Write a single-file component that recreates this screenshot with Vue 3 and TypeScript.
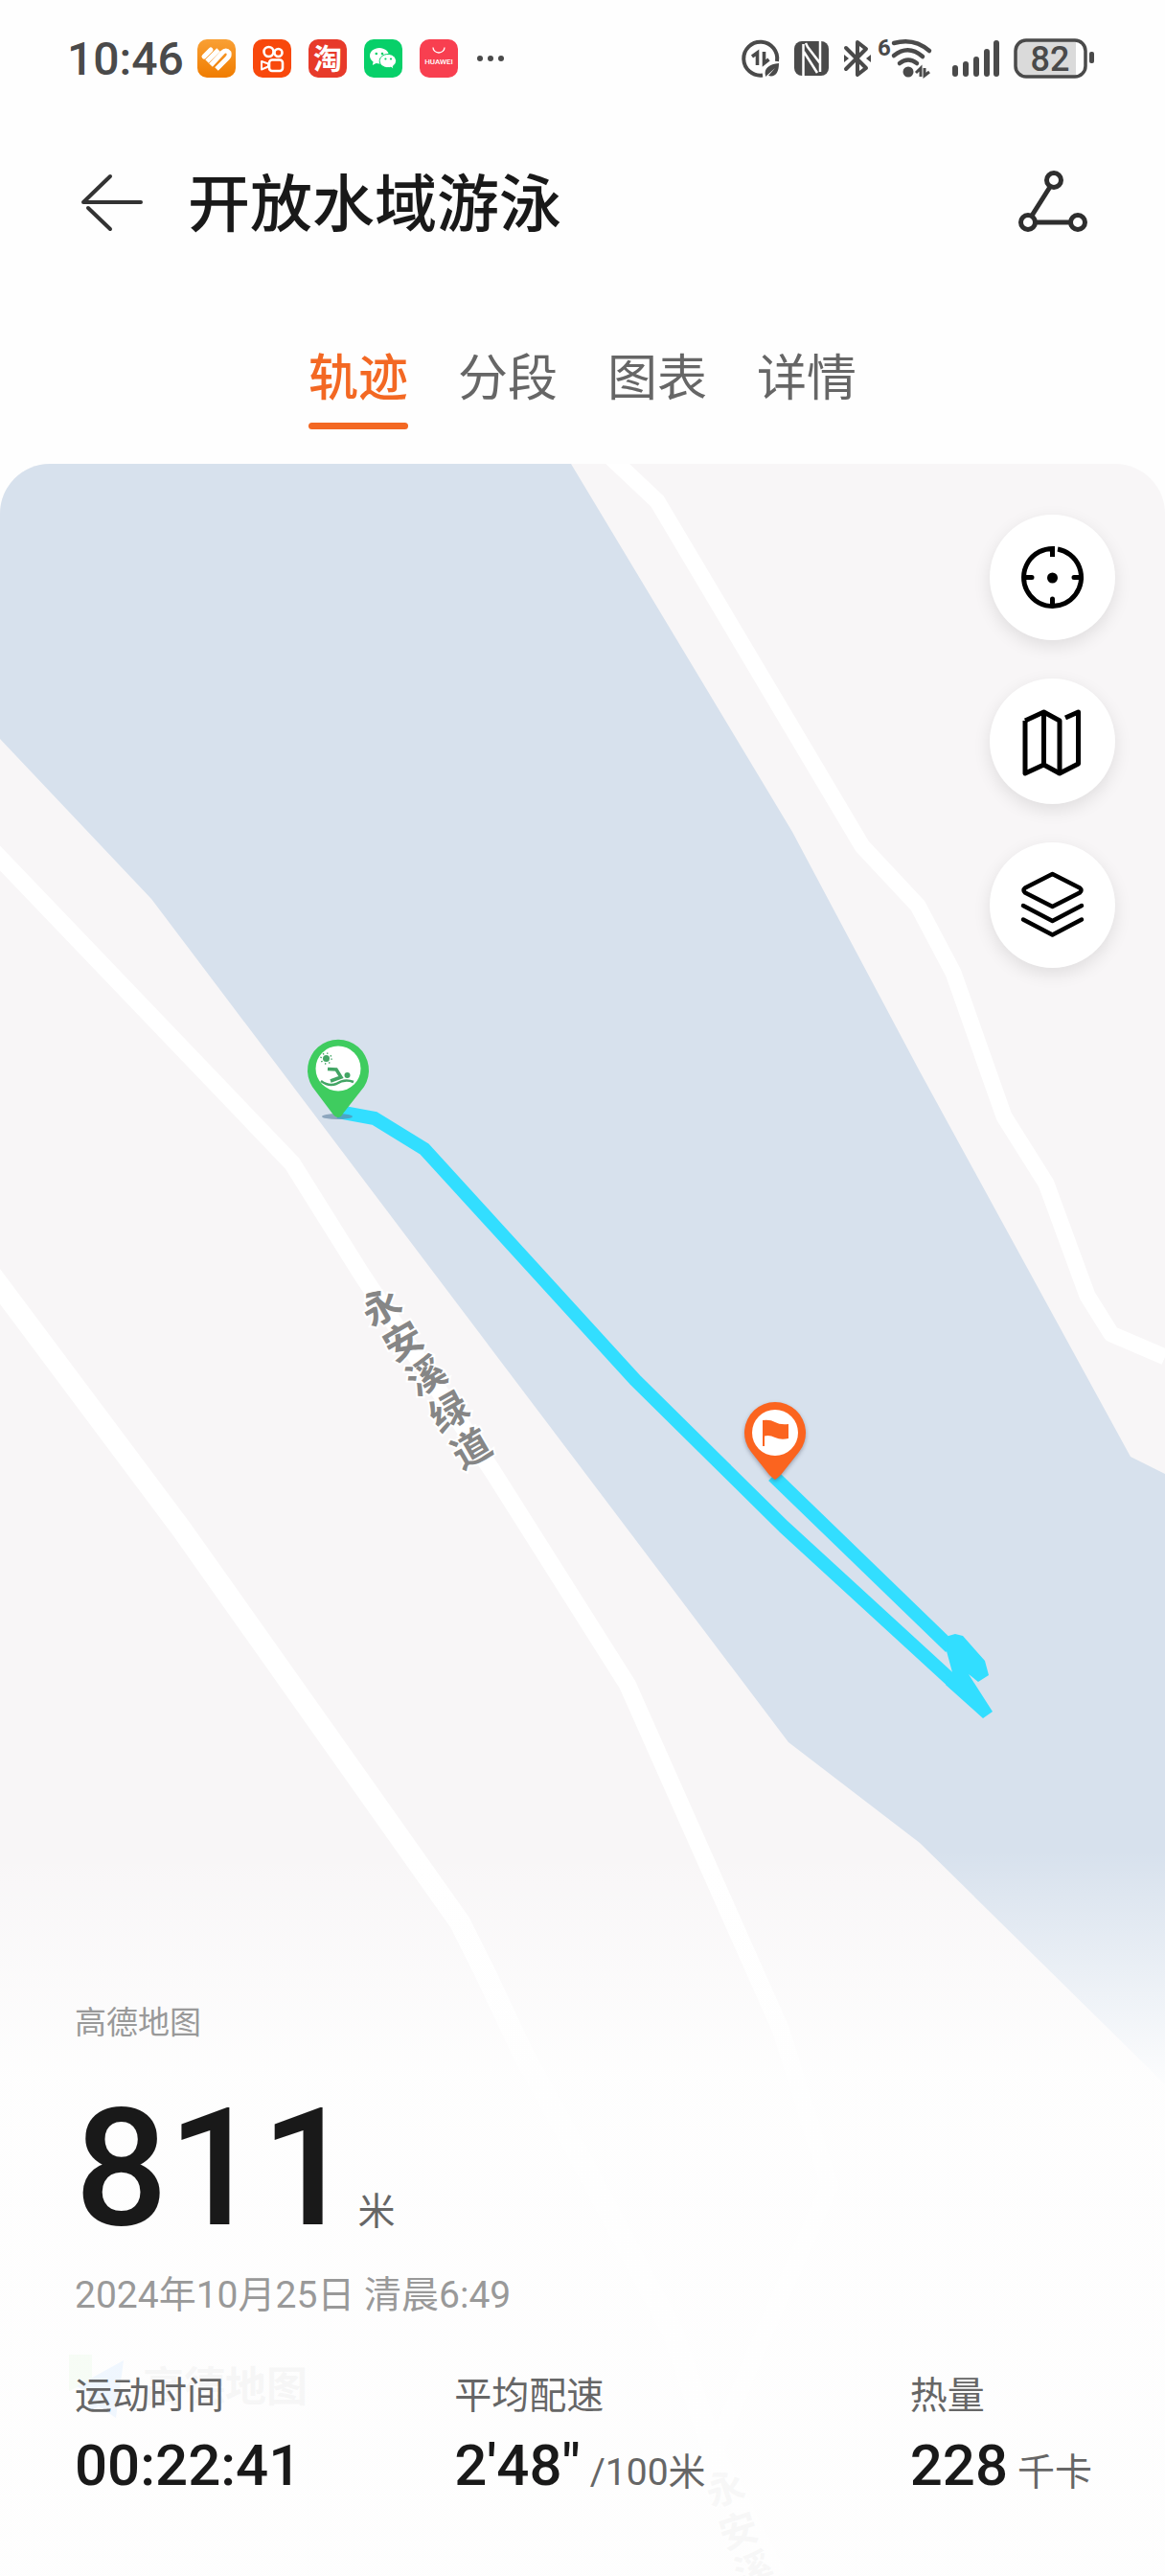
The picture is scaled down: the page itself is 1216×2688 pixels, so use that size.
<script setup lang="ts">
import { ref } from 'vue'

interface Metric {
  label: string
  value: string
  unit?: string
}

interface LabelGlyph {
  char: string
  x: number
  y: number
}

const tabs: string[] = ['轨迹', '分段', '图表', '详情']
const activeTab = ref<string>('轨迹')

const metrics: Metric[] = [
  { label: '运动时间', value: '00:22:41' },
  { label: '平均配速', value: '2\'48"', unit: '/100米' },
  { label: '热量', value: '228', unit: '千卡' },
]

// Street names follow their road, one rotated character at a time.
const streetLabel: LabelGlyph[] = [
  { char: '永', x: 398, y: 880 },
  { char: '安', x: 421, y: 916 },
  { char: '溪', x: 445, y: 952 },
  { char: '绿', x: 469, y: 990 },
  { char: '道', x: 492, y: 1028 },
]
const lowerLabel: LabelGlyph[] = [
  { char: '永', x: 757, y: 2113 },
  { char: '安', x: 771, y: 2157 },
  { char: '溪', x: 787, y: 2198 },
]
</script>

<template>
  <div class="page">
    <div class="status">
      <div class="status-left">
        <span class="clock">10:46</span>
        <svg class="app" viewBox="0 0 40 40" aria-hidden="true">
          <defs>
            <linearGradient id="health" x1="0" y1="0" x2="0" y2="1">
              <stop offset="0" stop-color="#f9a035" />
              <stop offset="1" stop-color="#f07c00" />
            </linearGradient>
          </defs>
          <rect width="40" height="40" rx="10" fill="url(#health)" />
          <g fill="none" stroke="#fff" stroke-width="5">
            <path d="M7 18 14 11" stroke-linecap="round" />
            <path d="M10 23 22 11" />
            <path d="M14 27 26 14Q30 10 33 14Q34 17 31 20L20 31" />
          </g>
        </svg>
        <svg class="app" viewBox="0 0 40 40" aria-hidden="true">
          <rect width="40" height="40" rx="10" fill="#f8480c" />
          <g fill="none" stroke="#fff" stroke-width="2.6">
            <circle cx="16.500" cy="13" r="5" />
            <circle cx="26.500" cy="14" r="4" />
            <rect x="17" y="21.500" width="14" height="11.500" rx="3" />
            <path d="M9 23v8.500L16 28.500v-3Z" stroke-width="2" stroke-linejoin="round" />
          </g>
        </svg>
        <svg class="app" viewBox="0 0 40 40" aria-hidden="true">
          <rect width="40" height="40" rx="10" fill="#e73a2a" />
          <text x="20" y="31" class="tao">淘</text>
        </svg>
        <svg class="app" viewBox="0 0 40 40" aria-hidden="true">
          <rect width="40" height="40" rx="10" fill="#07d069" />
          <path d="M16 9C10.500 9 6 12.600 6 17.200c0 2.600 1.400 4.800 3.600 6.300L8.800 27l3.800-2c1 .3 2.200.5 3.400.5 5.500 0 10-3.700 10-8.300S21.500 9 16 9Z" fill="#fff" />
          <path d="M25 15.500c-5 0-8.800 3.200-8.800 7.100S20 29.700 25 29.700c1 0 2-.2 2.900-.4l3.100 1.700-.8-2.900c2-1.300 3.300-3.200 3.300-5.500 0-3.900-3.600-7.100-8.500-7.100Z" fill="#fff" stroke="#07d069" stroke-width="1" />
          <g fill="#07d069">
            <circle cx="12.800" cy="15" r="1.300" /><circle cx="19" cy="15" r="1.300" />
            <circle cx="22.400" cy="20.500" r="1.100" /><circle cx="28" cy="20.500" r="1.100" />
          </g>
        </svg>
        <svg class="app" viewBox="0 0 40 40" aria-hidden="true">
          <rect width="40" height="40" rx="10" fill="#f83f50" />
          <path d="M14 8.500a6 5.500 0 0 0 12 0" fill="none" stroke="#fff" stroke-width="1.300" />
          <text x="20" y="26" class="hw">HUAWEI</text>
        </svg>
        <svg class="dots" viewBox="0 0 32 8" aria-hidden="true">
          <g fill="#4a4a4a"><circle cx="5" cy="4" r="3" /><circle cx="16" cy="4" r="3" /><circle cx="27" cy="4" r="3" /></g>
        </svg>
      </div>
      <svg class="indicators" viewBox="0 0 370 42" aria-label="电量 82%">
        <g fill="none" stroke="#4a4a4a" stroke-width="4">
          <path d="M37 24A17.500 17.500 0 1 0 22 38.500" />
          <path d="M11 19 16.500 15V28M23.500 14V26L28.500 22" stroke-width="3.600" />
        </g>
        <path d="M25 39C23 31 29 27 39 26C39 36 35 41 28 39L35 31 25 40Z" fill="#4a4a4a" />
        <rect x="55" y="3" width="36" height="36" rx="8" fill="#4a4a4a" />
        <path d="M64.500 39V6M82 3V35M67 5 69 9 82 26M65 14 79 36" fill="none" stroke="#fff" stroke-width="2.500" />
        <g fill="none" stroke="#4a4a4a" stroke-width="4" stroke-linejoin="round" stroke-linecap="round">
          <path d="M109 10 130 31 121 38V4L130 11 109 32" />
        </g>
        <path d="M107 17 112 21 107 25ZM135 17 130 21 135 25Z" fill="#4a4a4a" />
        <text x="149" y="18" class="six">6</text>
        <g fill="none" stroke="#4a4a4a" stroke-width="4.500" stroke-linecap="round">
          <path d="M159 5Q180 -1 196 13" /><path d="M159 18Q174 6 189 19" /><path d="M165 26Q174 19 183 26" />
        </g>
        <circle cx="174" cy="35" r="5.500" fill="#4a4a4a" />
        <path d="M182 36 187 31V40M191 31V39L196 35" fill="none" stroke="#4a4a4a" stroke-width="3" />
        <g stroke="#4a4a4a" stroke-width="6" stroke-linecap="round">
          <path d="M223 31V37M234 27V37M245 22V37M256 14V37M266 5V37" />
        </g>
        <path d="M297 2H349V40H297A11 11 0 0 1 286 29V13A11 11 0 0 1 297 2Z" fill="#dadada" />
        <rect x="286" y="2" width="73" height="38" rx="11" fill="none" stroke="#4a4a4a" stroke-width="3.500" />
        <rect x="363" y="14" width="5" height="12" rx="2" fill="#4a4a4a" />
        <text x="322" y="34" class="level">82</text>
      </svg>
    </div>

    <header class="bar">
      <button class="icon-btn" type="button" aria-label="返回">
        <svg viewBox="0 0 68 64" width="68" height="64" fill="none" stroke="#333" stroke-width="4" stroke-linecap="round">
          <path d="M65 32H5L33 5" stroke-linejoin="round" /><path d="M10 38 33 60" />
        </svg>
      </button>
      <h1>开放水域游泳</h1>
      <button class="icon-btn" type="button" aria-label="轨迹分享">
        <svg viewBox="0 0 76 68" width="76" height="68" fill="none" stroke="#2e2e2e" stroke-width="5">
          <circle cx="39" cy="11" r="7.500" /><circle cx="12" cy="55" r="7.500" /><circle cx="64" cy="55" r="7.500" />
          <path d="M35 18 16 48M20 55H56" />
        </svg>
      </button>
    </header>

    <nav class="tabs" role="tablist">
      <button
        v-for="tab in tabs"
        :key="tab"
        type="button"
        role="tab"
        class="tab"
        :class="{ active: tab === activeTab }"
        :aria-selected="tab === activeTab"
        @click="activeTab = tab"
      >{{ tab }}</button>
    </nav>

    <main class="map">
      <svg class="canvas" viewBox="0 0 1216 2204" preserveAspectRatio="xMidYMin slice" aria-label="游泳轨迹地图">
        <rect width="1216" height="2204" fill="#f8f6f7" />
        <path d="M0 0H596L827 384 960 634 1180 1036 1216 1054V1691L960 1439 823 1334 158 454 0 287Z" fill="#d7e1ed" />
        <g fill="none" stroke="#fff" stroke-linejoin="round">
          <path d="M634 -10 686 39 900 399 958 461 995 531 1048 681 1092 751 1135 868 1160 908 1216 932" stroke-width="17" />
          <path d="M-10 401 103 519 305 730 377 845 514 1051 655 1274 815 1634 866 1797 795 1956 745 2076" stroke-width="18" />
          <path d="M-10 845 189 1111 480 1522 507 1576 546 1659 607 1770 703 1951 745 2076 810 2204" stroke-width="22" />
        </g>
        <g class="street">
          <text v-for="g in streetLabel" :key="g.char" :transform="`translate(${g.x} ${g.y}) rotate(-30)`" y="14">{{ g.char }}</text>
        </g>
        <g class="street">
          <text v-for="g in lowerLabel" :key="g.char" :transform="`translate(${g.x} ${g.y}) rotate(-18)`" y="14">{{ g.char }}</text>
        </g>
        <g class="watermark">
          <path d="M72 1973H96V2000L72 2011Z" fill="#7ddb6a" />
          <path d="M80 2006 129 1979 121 2039 103 2027 93 2033V2013Z" fill="#0a7cff" />
          <text x="149" y="2022">高德地图</text>
        </g>
        <g fill="none" stroke="#32deff" stroke-width="14">
          <path d="M353 676 391 683 443 715 663 956 818 1109 998 1274" stroke-linejoin="round" />
          <path d="M807 1056 992 1235" />
        </g>
        <path d="M990 1223 997 1221 1005 1223 1028 1249 1032 1264 1021 1271 1011 1263 1036 1302 1026 1309 987 1274 994 1261 988 1239Z" fill="#32deff" />
        <ellipse cx="352" cy="681" rx="16" ry="3" fill="#5b7f9f" opacity=".6" />
        <g>
          <path d="M353 682Q350 682 347 678L326 650A32 32 0 1 1 380 650L358 678Q356 682 353 682Z" fill="#3fcc5f" />
          <circle cx="353" cy="631" r="23.500" fill="#fff" />
          <circle cx="340.500" cy="620.500" r="3.500" fill="#43a565" />
          <circle cx="340.500" cy="620.500" r="5.500" fill="none" stroke="#43a565" stroke-width="1.500" stroke-dasharray="1.300 3.020" />
          <path d="M342 631.500 351 632 356 640 345 644" fill="none" stroke="#43a565" stroke-width="3.500" />
          <circle cx="362.500" cy="638" r="3" fill="#43a565" />
          <path d="M335 644Q343 650 351 647Q360 641 369 645" fill="none" stroke="#43a565" stroke-width="2.500" />
        </g>
        <g class="finish">
          <path d="M809 1060Q806 1058 803 1055L784 1031A32 32 0 1 1 834 1031L815 1055Q812 1058 809 1060Z" fill="#fb641f" />
          <circle cx="809" cy="1011" r="24" fill="#fff" />
          <path d="M796 998Q804 997 809 1000T823 1002V1017Q815 1019 809 1016T798 1014.500V1025H796Z" fill="#fb641f" />
        </g>
      </svg>

      <div class="controls">
        <button type="button" aria-label="定位">
          <svg viewBox="0 0 72 72" fill="none" stroke="#000" stroke-width="5" stroke-linecap="round">
            <path d="M41 6A30 30 0 1 1 35.500 5.500V14" stroke-linecap="butt" />
            <path d="M7 35.500H14M58 35.500H65M35.500 65V58" />
            <circle cx="35.500" cy="36" r="5.500" fill="#000" stroke="none" />
          </svg>
        </button>
        <button type="button" aria-label="地图类型">
          <svg viewBox="0 0 72 72" fill="none" stroke="#000" stroke-width="5" stroke-linejoin="round">
            <path d="M7 14 26.500 5 43 14V69L62.500 59V5L49 11" />
            <path d="M26.500 5V60L43 69M26.500 60 7 69V14" />
          </svg>
        </button>
        <button type="button" aria-label="图层">
          <svg viewBox="0 0 72 72" fill="none" stroke="#000" stroke-width="4.500" stroke-linejoin="round" stroke-linecap="round">
            <path d="M35.500 3 64 17.500Q67 20 64 22.500L35.500 37 7 22.500Q4 20 7 17.500Z" />
            <path d="M5 36 35.500 52 66 36M5 50.500 35.500 66.500 66 50.500" />
          </svg>
        </button>
      </div>

      <section class="summary">
        <p class="source">高德地图</p>
        <p class="distance"><span class="number">811</span><span class="unit">米</span></p>
        <p class="date">2024年10月25日 清晨6:49</p>
        <dl class="metrics">
          <div v-for="m in metrics" :key="m.label">
            <dt>{{ m.label }}</dt>
            <dd><span class="value">{{ m.value }}</span><span v-if="m.unit" class="small">{{ m.unit }}</span></dd>
          </div>
        </dl>
      </section>
    </main>
  </div>
</template>

<style>
body {
  margin: 0;
  background: #fefefe;
}
</style>

<style scoped>
.page {
  display: flex;
  flex-direction: column;
  min-height: 100vh;
  background: #fefefe;
  color: #191919;
  font-family: Roboto, "Noto Sans CJK SC", sans-serif;
}
button {
  padding: 0;
  border: 0;
  background: none;
  color: inherit;
  font: inherit;
  cursor: pointer;
}
.status {
  display: flex;
  align-items: center;
  justify-content: space-between;
  height: 122px;
  padding: 0 72px 0 70px;
  color: #4a4a4a;
}
.status-left {
  display: flex;
  align-items: center;
  gap: 18px;
}
.clock {
  width: 118px;
  padding-top: 2px;
  font-size: 48px;
  font-weight: 500;
  line-height: 60px;
  white-space: nowrap;
}
.app {
  width: 40px;
  height: 40px;
}
.tao {
  fill: #fff;
  font-size: 30px;
  font-weight: 700;
  text-anchor: middle;
}
.hw {
  fill: #fff;
  font-size: 8px;
  font-weight: 500;
  text-anchor: middle;
}
.dots {
  width: 32px;
  height: 8px;
}
.indicators {
  width: 370px;
  height: 42px;
  overflow: visible;
}
.six {
  fill: #4a4a4a;
  font-size: 24px;
  font-weight: 700;
  text-anchor: middle;
}
.level {
  fill: #4a4a4a;
  font-size: 36px;
  font-weight: 500;
  text-anchor: middle;
}
.bar {
  display: flex;
  align-items: center;
  height: 178px;
  padding: 0 79px 0 82px;
}
.icon-btn {
  display: flex;
}
h1 {
  flex: 1;
  margin: 0 0 0 46px;
  padding-top: 6px;
  font-size: 65px;
  font-weight: 500;
  line-height: 80px;
}
.tabs {
  display: flex;
  justify-content: center;
  gap: 52px;
  padding: 64px 0 36px;
}
.tab {
  padding-bottom: 13px;
  border-bottom: 7px solid transparent;
  color: #666;
  font-size: 52px;
  line-height: 64px;
}
.tab.active {
  position: relative;
  color: #f36823;
  font-weight: 500;
}
.tab.active::after {
  content: "";
  position: absolute;
  left: 0;
  right: 0;
  bottom: -7px;
  height: 7px;
  border-radius: 4px;
  background: #f36823;
}
.map {
  position: relative;
  display: flex;
  flex: 1;
  flex-direction: column;
  justify-content: flex-end;
  min-height: 1400px;
  overflow: hidden;
  border-radius: 52px 52px 0 0;
}
.canvas {
  position: absolute;
  inset: 0;
  width: 100%;
  height: 100%;
}
.street text {
  fill: #868686;
  stroke: #fff;
  stroke-width: 4px;
  paint-order: stroke;
  font-size: 40px;
  font-weight: 700;
  text-anchor: middle;
}
.watermark text {
  fill: #777;
  font-size: 43px;
  font-weight: 700;
}
.finish {
  filter: drop-shadow(0 2px 2px rgba(60, 60, 80, 0.4));
}
.controls {
  position: absolute;
  top: 53px;
  right: 52px;
  display: flex;
  flex-direction: column;
  gap: 40px;
}
.controls button {
  display: flex;
  align-items: center;
  justify-content: center;
  width: 131px;
  height: 131px;
  border-radius: 50%;
  background: #fff;
  box-shadow: 0 6px 18px rgba(0, 0, 0, 0.1);
}
.controls svg {
  width: 72px;
  height: 72px;
}
.summary {
  position: relative;
  padding: 160px 76px 83px 78px;
  background: linear-gradient(to bottom, rgba(254, 254, 254, 0), rgba(254, 254, 254, 0.94) 240px);
}
.summary p,
.summary dl,
.summary dd {
  margin: 0;
}
.summary .source {
  color: #999;
  font-size: 33px;
  line-height: 40px;
}
.summary .distance {
  display: flex;
  align-items: baseline;
  gap: 4px;
  margin-top: 46px;
}
.number {
  font-size: 171px;
  font-weight: 500;
  line-height: 172px;
}
.unit {
  color: #666;
  font-size: 39px;
  line-height: 48px;
}
.summary .date {
  margin-top: 22px;
  color: #999;
  font-size: 39px;
  line-height: 48px;
}
.summary .metrics {
  display: grid;
  grid-template-columns: 5fr 6fr auto;
  margin-top: 57px;
}
dt {
  color: #666;
  font-size: 39px;
  line-height: 48px;
}
.summary dd {
  display: flex;
  align-items: baseline;
  gap: 10px;
  margin-top: 17px;
  white-space: nowrap;
}
.value {
  font-size: 60px;
  font-weight: 500;
  line-height: 64px;
}
.small {
  color: #666;
  font-size: 39px;
  line-height: 48px;
}
</style>
